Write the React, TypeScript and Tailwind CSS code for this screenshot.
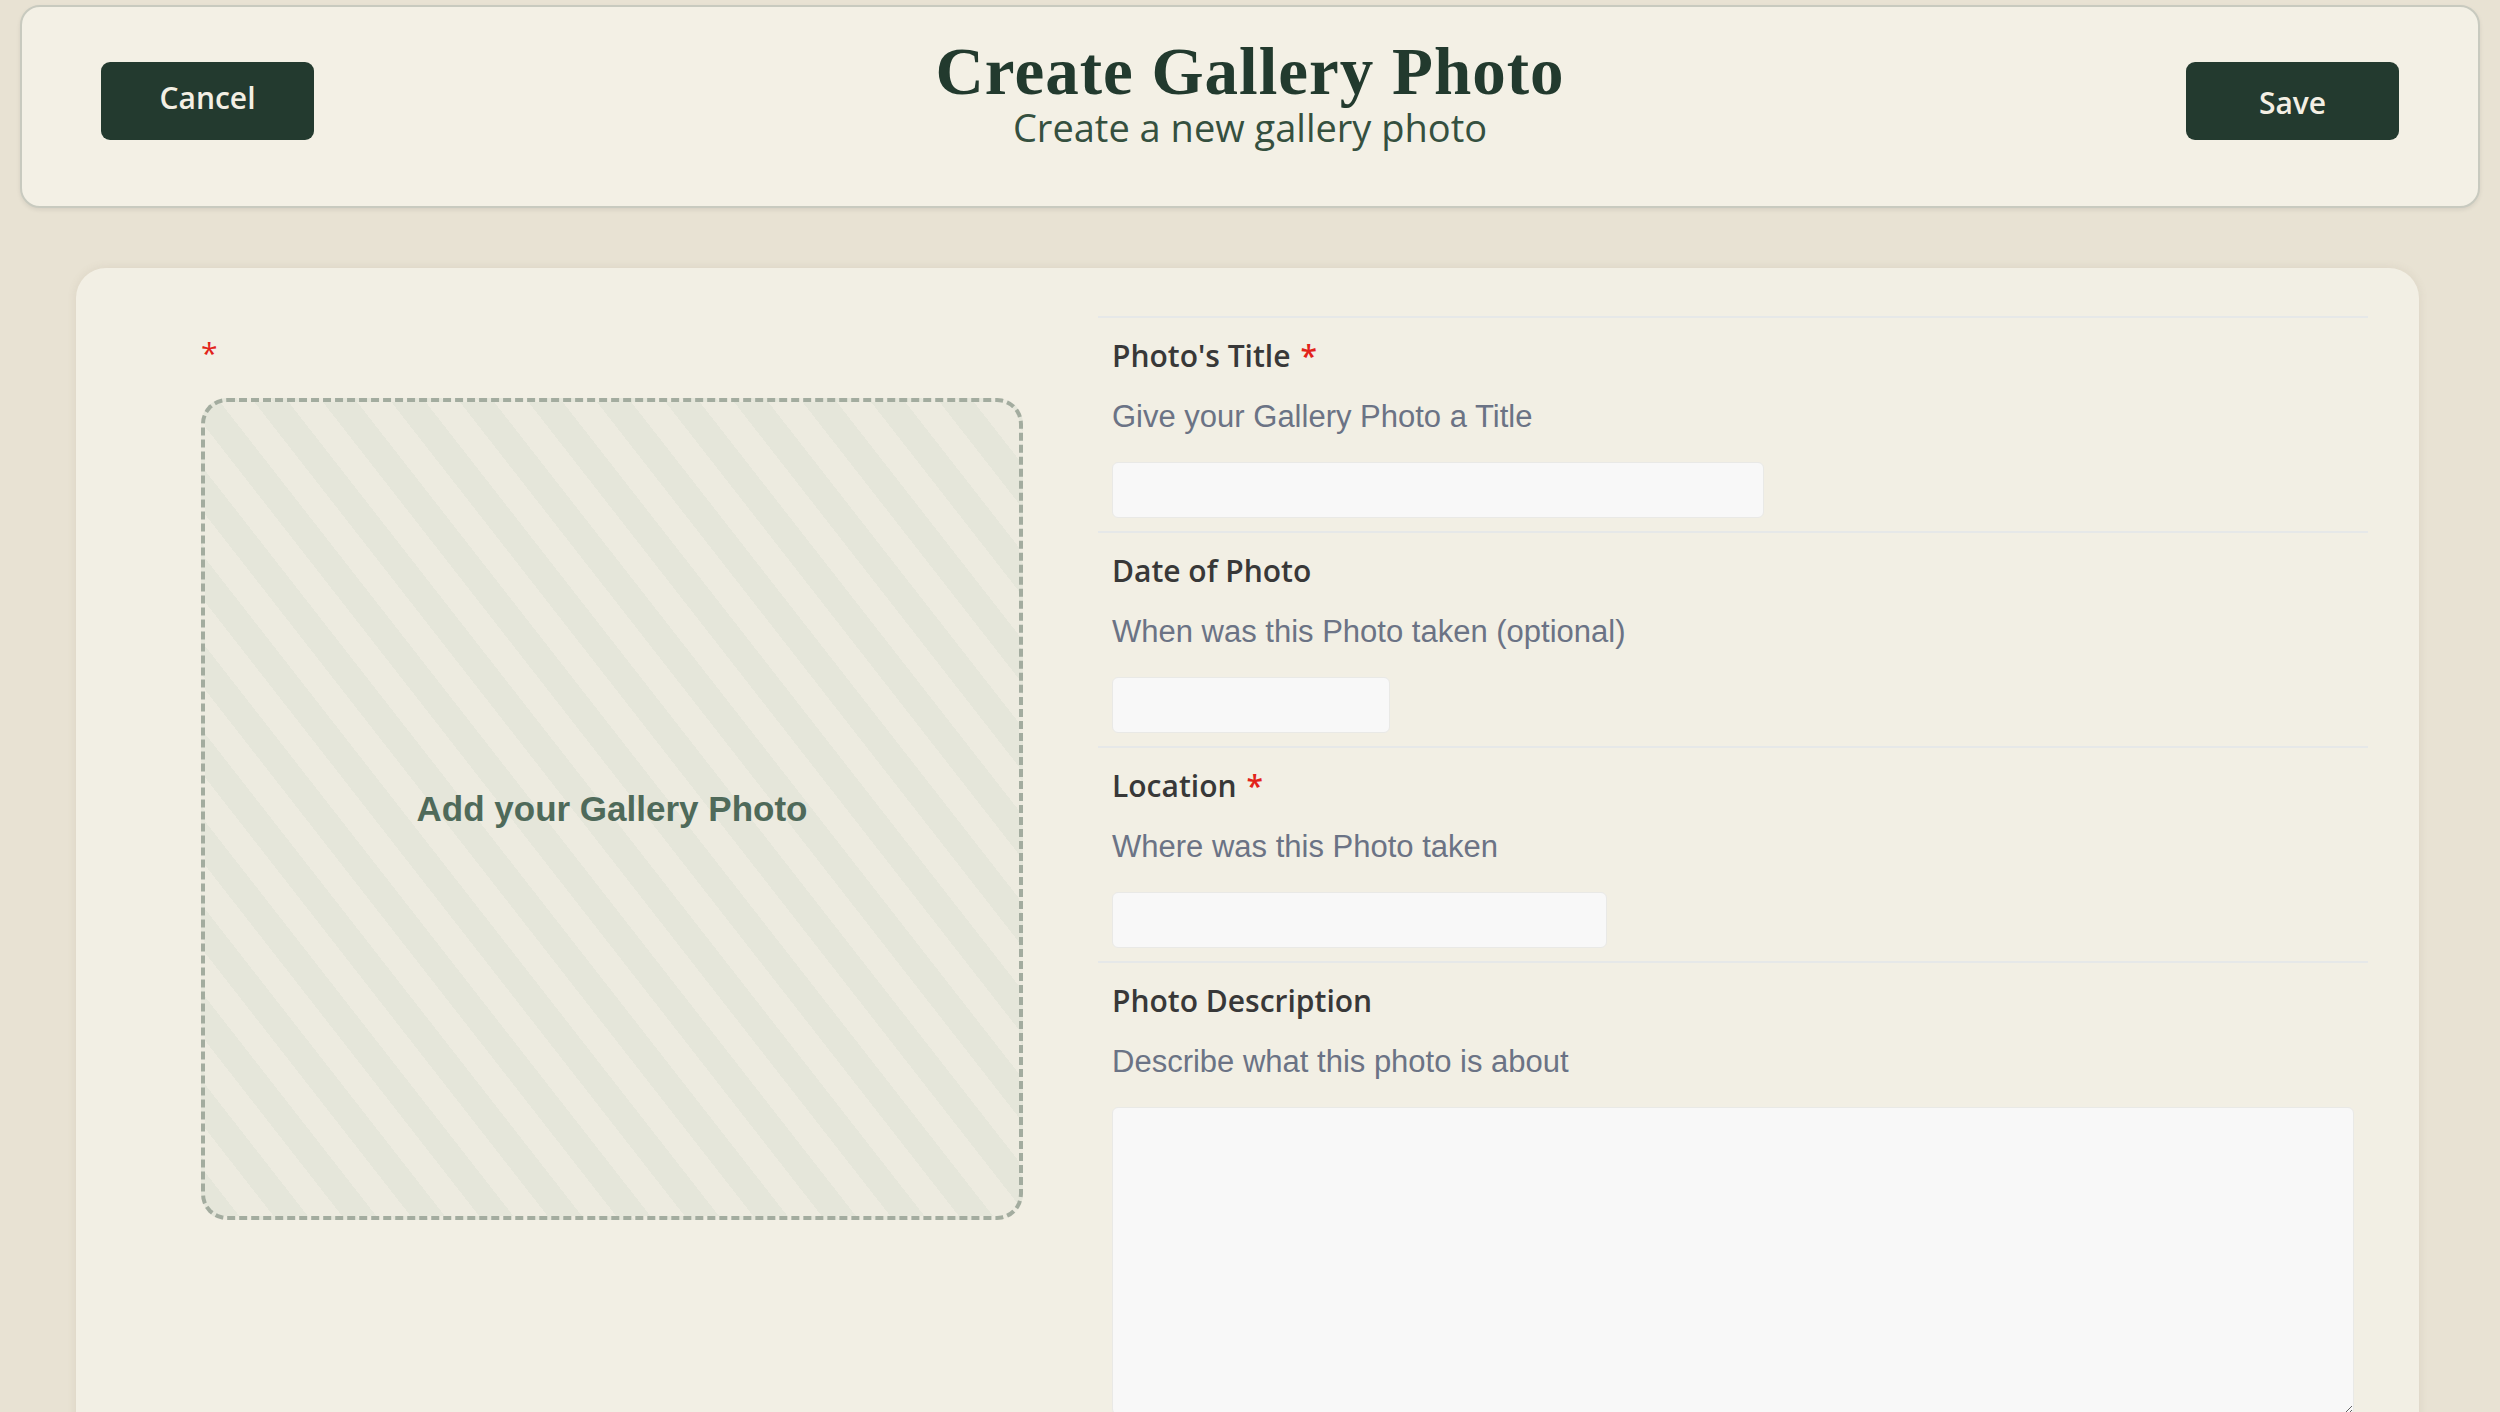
import type { ReactNode } from "react";

const openSans = "font-['Open_Sans',sans-serif]";
const arial = "font-['Liberation_Sans',Arial,sans-serif]";

type Field = {
  label: string;
  hint: string;
  required?: boolean;
  width?: string;
  area?: boolean;
};

const fields: Field[] = [
  { label: "Photo's Title", hint: "Give your Gallery Photo a Title", required: true, width: "w-[652px]" },
  { label: "Date of Photo", hint: "When was this Photo taken (optional)", width: "w-[278px]" },
  { label: "Location", hint: "Where was this Photo taken", required: true, width: "w-[495px]" },
  { label: "Photo Description", hint: "Describe what this photo is about", area: true },
];

function HeaderButton({ children, className }: { children: ReactNode; className?: string }) {
  return (
    <button
      type="button"
      className={`mt-[26px] flex h-[78px] w-[213px] shrink-0 items-center justify-center rounded-[9px] bg-[#233a2f] text-[30px] font-semibold text-[#f3efe4] ${openSans} ${className ?? ""}`}
    >
      {children}
    </button>
  );
}

function FormField({ field }: { field: Field }) {
  return (
    <div className="border-t-2 border-[#e6e8e8] px-[14px] pt-[18px] pb-[13px]">
      <div className={`h-[40px] text-[30px] leading-[40px] font-semibold text-[#383838] ${openSans}`}>
        {field.label}
        {field.required && <span className="ml-[10px] text-[#e2231a]">*</span>}
      </div>
      <div className={`mt-[23px] text-[31px] leading-[36px] text-[#6b7385] ${arial}`}>{field.hint}</div>
      {field.area ? (
        <textarea className="mt-[27px] block h-[308px] w-full rounded-[6px] border border-[#e9e9e6] bg-[#f8f8f8]" />
      ) : (
        <input
          type="text"
          className={`mt-[27px] block h-[56px] ${field.width} rounded-[6px] border border-[#e9e9e6] bg-[#f8f8f8]`}
        />
      )}
    </div>
  );
}

export default function App() {
  return (
    <div className="min-h-screen w-full overflow-hidden bg-[#e8e2d3] pt-[5px]">
      <header className="mx-[20px] flex h-[203px] items-start justify-between rounded-[20px] border-2 border-[#c8cabf] bg-[#f3f0e5] px-[79px] pt-[29px] shadow-[0_2px_4px_rgba(0,0,0,0.08)]">
        <HeaderButton className="pb-[8px]">Cancel</HeaderButton>
        <div className="flex flex-1 flex-col items-center">
          <h1 className="font-['Liberation_Serif','Times_New_Roman',serif] text-[67px] leading-[70px] font-bold tracking-[1px] text-[#223a2e]">
            Create Gallery Photo
          </h1>
          <p className={`text-[38px] leading-[42px] text-[#35503f] ${openSans}`}>Create a new gallery photo</p>
        </div>
        <HeaderButton className="pt-[2px]">Save</HeaderButton>
      </header>

      <main className="mx-[76px] mt-[60px] mr-[81px] flex gap-[75px] rounded-[30px] bg-[#f2efe4] pr-[51px] pl-[125px] shadow-[0_0_10px_rgba(120,110,80,0.12)]">
        <div className="w-[822px] shrink-0 pt-[64px]">
          <div className={`h-[41px] text-[30px] leading-[41px] text-[#e2231a] ${openSans}`}>*</div>
          <div className="mt-[25px] flex h-[822px] w-[822px] items-center justify-center rounded-[26px] border-4 border-dashed border-[#a3ac9f] bg-[repeating-linear-gradient(52deg,#e5e6da_0px,#e5e6da_27px,#edebe0_27px,#edebe0_54px)]">
            <span className={`text-[35px] font-bold text-[#4f6a5a] ${arial}`}>Add your Gallery Photo</span>
          </div>
        </div>
        <div className="flex-1 pt-[48px] pb-[40px]">
          {fields.map((f) => (
            <FormField key={f.label} field={f} />
          ))}
        </div>
      </main>
    </div>
  );
}
